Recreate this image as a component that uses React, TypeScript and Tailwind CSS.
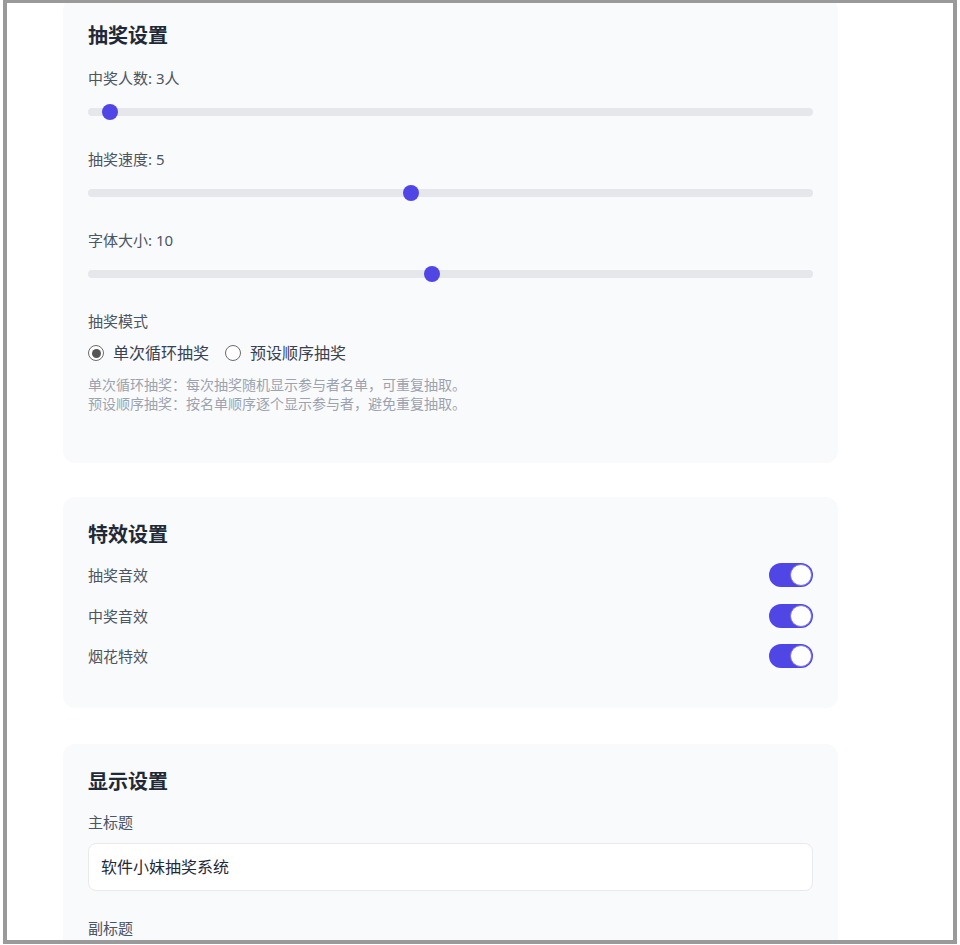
import React from "react";

const FONT = { fontFamily: '"Noto Sans", "Noto Sans CJK SC", sans-serif' };

function Slider({ pct }: { pct: number }) {
  return (
    <div className="relative h-4 w-full">
      <div className="absolute left-0 right-0 top-[4px] h-2 rounded-full bg-[#e5e7eb]" />
      <div
        className="absolute top-0 h-4 w-4 rounded-full bg-[#4f46e5]"
        style={{ left: `calc(${pct} * (100% - 16px))` }}
      />
    </div>
  );
}

function Toggle() {
  return (
    <div className="relative h-6 w-11 rounded-full bg-[#4f46e5]">
      <div className="absolute right-[1px] top-[1px] h-[22px] w-[22px] rounded-full border border-[#7b75ee] bg-white" />
    </div>
  );
}

function Radio({ checked, label }: { checked: boolean; label: string }) {
  return (
    <div className="flex items-center gap-[9px]">
      <div className="flex h-4 w-4 items-center justify-center rounded-full border border-[#6b6b6b] bg-white">
        {checked && <div className="h-[9px] w-[9px] rounded-full bg-[#555]" />}
      </div>
      <span className="text-[16px] leading-6 text-[#374151]">{label}</span>
    </div>
  );
}

export default function App() {
  return (
    <div className="relative h-[945px] w-[960px] overflow-hidden bg-white" style={FONT}>
      <div className="ml-[3px] h-[944px] w-[954px] overflow-hidden border-x-4 border-b-4 border-t-[3px] border-[#9a9a9a] bg-white">
        <div className="pl-[56px] pt-0">
          {/* Card 1 */}
          <div className="-mt-[5px] w-[775px] rounded-xl bg-[#f9fafb] px-[25px] pb-[50px] pt-6">
            <h2 className="text-[20px] font-bold leading-7 text-[#1f2937]">抽奖设置</h2>
            <div className="mt-[17px] text-[15px] leading-[22px] text-[#4b5563]">中奖人数: 3人</div>
            <div className="mt-[15px]">
              <Slider pct={2 / 99} />
            </div>
            <div className="mt-[28px] text-[15px] leading-[22px] text-[#4b5563]">抽奖速度: 5</div>
            <div className="mt-[15px]">
              <Slider pct={4 / 9} />
            </div>
            <div className="mt-[28px] text-[15px] leading-[22px] text-[#4b5563]">字体大小: 10</div>
            <div className="mt-[15px]">
              <Slider pct={9 / 19} />
            </div>
            <div className="mt-[28px] text-[15px] leading-[22px] text-[#4b5563]">抽奖模式</div>
            <div className="mt-[9px] flex items-center gap-[16px]">
              <Radio checked label="单次循环抽奖" />
              <Radio checked={false} label="预设顺序抽奖" />
            </div>
            <div className="mt-[10px] text-[14px] leading-[19px] text-[#9ca3af]">
              <p>单次循环抽奖：每次抽奖随机显示参与者名单，可重复抽取。</p>
              <p>预设顺序抽奖：按名单顺序逐个显示参与者，避免重复抽取。</p>
            </div>
          </div>

          {/* Card 2 */}
          <div className="mt-[34px] w-[775px] rounded-xl bg-[#f9fafb] px-[25px] pb-[40px] pt-6">
            <h2 className="text-[20px] font-bold leading-7 text-[#1f2937]">特效设置</h2>
            <div className="mt-[14px] flex flex-col gap-[16.5px]">
              {["抽奖音效", "中奖音效", "烟花特效"].map((t) => (
                <div key={t} className="flex items-center justify-between">
                  <span className="text-[15px] leading-6 text-[#4b5563]">{t}</span>
                  <Toggle />
                </div>
              ))}
            </div>
          </div>

          {/* Card 3 */}
          <div className="mt-[36px] w-[775px] rounded-xl bg-[#f9fafb] px-[25px] pb-10 pt-6">
            <h2 className="text-[20px] font-bold leading-7 text-[#1f2937]">显示设置</h2>
            <div className="mt-[15px] text-[15px] leading-[22px] text-[#4b5563]">主标题</div>
            <div className="mt-[10px] flex h-12 items-center rounded-lg border border-[#e8eaee] bg-white px-3 text-[16px] text-[#1f2937]">
              软件小妹抽奖系统
            </div>
            <div className="mt-[26px] text-[15px] leading-[22px] text-[#4b5563]">副标题</div>
          </div>
        </div>
      </div>
    </div>
  );
}
